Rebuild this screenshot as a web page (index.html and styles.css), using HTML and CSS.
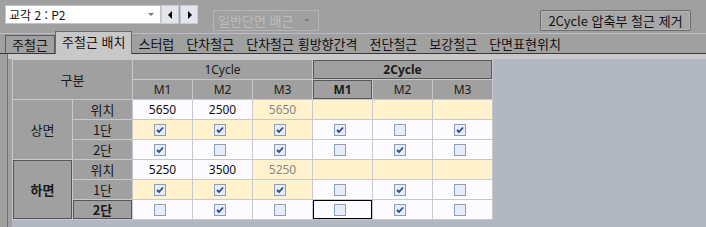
FILE: index.html
```html
<!DOCTYPE html>
<html lang="ko">
<head>
    <meta charset="UTF-8">
    <title>주철근 배치</title>
    <link rel="stylesheet" href="styles.css">
</head>
<body>
    <div class="toolbar">
        <div class="combo combo-main">
            <span>교각 2 : P2</span>
            <i class="caret"></i>
        </div>
        <div class="nav-group">
            <button class="nav-button"><svg width="5" height="8" viewBox="0 0 5 8"><path d="M4 0 L0 4 L4 8 Z" fill="#000"/></svg></button>
            <button class="nav-button"><svg width="5" height="8" viewBox="0 0 5 8"><path d="M1 0 L5 4 L1 8 Z" fill="#000"/></svg></button>
        </div>
        <div class="combo combo-disabled">
            <span>일반단면 배근</span>
            <i class="caret"></i>
        </div>
        <button class="action-button">2Cycle 압축부 철근 제거</button>
    </div>

    <div class="tabs">
        <div class="tab tab-first">주철근</div>
        <div class="tab tab-active">주철근 배치</div>
        <div class="tab">스터럽</div>
        <div class="tab">단차철근</div>
        <div class="tab">단차철근 횡방향간격</div>
        <div class="tab">전단철근</div>
        <div class="tab">보강철근</div>
        <div class="tab">단면표현위치</div>
    </div>

    <div class="panel">
        <div class="panel-strip"></div>
        <div class="panel-body">
            <div class="content">
                <div class="grid">
                    <!-- header -->
                    <div class="cell head ko span-head">구분</div>
                    <div class="cell head span-cycle">1Cycle</div>
                    <div class="cell head span-cycle selected">2Cycle</div>
                    <div class="cell head">M1</div>
                    <div class="cell head">M2</div>
                    <div class="cell head">M3</div>
                    <div class="cell head selected">M1</div>
                    <div class="cell head">M2</div>
                    <div class="cell head">M3</div>

                    <!-- 상면 -->
                    <div class="cell head ko span-side">상면</div>
                    <div class="cell head ko">위치</div>
                    <div class="cell data">5650</div>
                    <div class="cell data">2500</div>
                    <div class="cell data yellow muted">5650</div>
                    <div class="cell data yellow"></div>
                    <div class="cell data yellow"></div>
                    <div class="cell data yellow"></div>

                    <div class="cell head ko">1단</div>
                    <div class="cell data yellow check"><span class="chk on"><svg viewBox="0 0 10 10"><path d="M2 5 L4 7 L8 2.5"/></svg></span></div>
                    <div class="cell data yellow check"><span class="chk on"><svg viewBox="0 0 10 10"><path d="M2 5 L4 7 L8 2.5"/></svg></span></div>
                    <div class="cell data yellow check"><span class="chk on"><svg viewBox="0 0 10 10"><path d="M2 5 L4 7 L8 2.5"/></svg></span></div>
                    <div class="cell data check"><span class="chk on"><svg viewBox="0 0 10 10"><path d="M2 5 L4 7 L8 2.5"/></svg></span></div>
                    <div class="cell data check"><span class="chk"></span></div>
                    <div class="cell data check"><span class="chk on"><svg viewBox="0 0 10 10"><path d="M2 5 L4 7 L8 2.5"/></svg></span></div>

                    <div class="cell head ko">2단</div>
                    <div class="cell data check"><span class="chk on"><svg viewBox="0 0 10 10"><path d="M2 5 L4 7 L8 2.5"/></svg></span></div>
                    <div class="cell data check"><span class="chk"></span></div>
                    <div class="cell data check"><span class="chk on"><svg viewBox="0 0 10 10"><path d="M2 5 L4 7 L8 2.5"/></svg></span></div>
                    <div class="cell data check"><span class="chk"></span></div>
                    <div class="cell data check"><span class="chk on"><svg viewBox="0 0 10 10"><path d="M2 5 L4 7 L8 2.5"/></svg></span></div>
                    <div class="cell data check"><span class="chk"></span></div>

                    <!-- 하면 -->
                    <div class="cell head ko span-side selected">하면</div>
                    <div class="cell head ko">위치</div>
                    <div class="cell data">5250</div>
                    <div class="cell data">3500</div>
                    <div class="cell data yellow muted">5250</div>
                    <div class="cell data yellow"></div>
                    <div class="cell data yellow"></div>
                    <div class="cell data yellow"></div>

                    <div class="cell head ko">1단</div>
                    <div class="cell data yellow check"><span class="chk on"><svg viewBox="0 0 10 10"><path d="M2 5 L4 7 L8 2.5"/></svg></span></div>
                    <div class="cell data yellow check"><span class="chk on"><svg viewBox="0 0 10 10"><path d="M2 5 L4 7 L8 2.5"/></svg></span></div>
                    <div class="cell data yellow check"><span class="chk on"><svg viewBox="0 0 10 10"><path d="M2 5 L4 7 L8 2.5"/></svg></span></div>
                    <div class="cell data check"><span class="chk"></span></div>
                    <div class="cell data check"><span class="chk on"><svg viewBox="0 0 10 10"><path d="M2 5 L4 7 L8 2.5"/></svg></span></div>
                    <div class="cell data check"><span class="chk"></span></div>

                    <div class="cell head ko selected">2단</div>
                    <div class="cell data check"><span class="chk"></span></div>
                    <div class="cell data check"><span class="chk on"><svg viewBox="0 0 10 10"><path d="M2 5 L4 7 L8 2.5"/></svg></span></div>
                    <div class="cell data check"><span class="chk"></span></div>
                    <div class="cell data check focused"><span class="chk"></span></div>
                    <div class="cell data check"><span class="chk on"><svg viewBox="0 0 10 10"><path d="M2 5 L4 7 L8 2.5"/></svg></span></div>
                    <div class="cell data check"><span class="chk"></span></div>
                </div>
            </div>
        </div>
    </div>
</body>
</html>
```

FILE: styles.css
```css
body {
    margin: 0;
    width: 706px;
    height: 227px;
    overflow: hidden;
    background: #a0a0a0;
    font-family: "Noto Sans CJK KR", "Noto Sans", sans-serif;
    font-size: 13px;
    color: #111;
}
.toolbar {
    display: flex;
    align-items: flex-start;
    box-sizing: border-box;
    height: 34px;
    border-bottom: 1px solid #b9bdc9;
}
.combo {
    box-sizing: border-box;
    display: flex;
    align-items: center;
    justify-content: space-between;
    width: 156px;
    height: 19px;
    margin: 5px 0 0 5px;
    padding: 0 6px 0 3px;
    background: #fff;
    border: 1px solid #c4c4c4;
    line-height: 17px;
}
.combo-main {
    font-size: 12px;
}
.caret {
    width: 0;
    height: 0;
    border-left: 3px solid transparent;
    border-right: 3px solid transparent;
    border-top: 3px solid #777;
}
.nav-group {
    display: flex;
    gap: 1px;
    margin: 5px 0 0 0;
}
.nav-button {
    box-sizing: border-box;
    width: 18px;
    height: 19px;
    padding: 0;
    border: 1px solid #c6cad2;
    background: #e4e6eb;
    display: flex;
    align-items: center;
    justify-content: center;
}
.combo-disabled {
    width: 106px;
    height: 21px;
    margin: 10px 0 0 15px;
    padding: 0 8px 0 4px;
    background: transparent;
    border-color: #b5b5b5;
    color: #bdbdbd;
    line-height: 19px;
}
.combo-disabled .caret {
    border-top-color: #86836c;
}
.action-button {
    box-sizing: border-box;
    width: 151px;
    height: 21px;
    margin: 10px 15px 0 auto;
    padding: 0;
    border: 1px solid #6c6c6c;
    border-radius: 2px;
    background: #a6a6a6;
    box-shadow: inset 0 0 0 1px #b4b4b4;
    font-family: "Noto Sans CJK KR", "Noto Sans", sans-serif;
    font-size: 13px;
    color: #111;
    line-height: 18px;
}
.tabs {
    display: flex;
    align-items: flex-end;
    height: 19px;
    padding-left: 5px;
    border-bottom: 1px solid #3a3a3a;
}
.tab {
    height: 18px;
    line-height: 17px;
    padding: 0 6px;
    white-space: nowrap;
    color: #111;
}
.tab-first {
    box-sizing: border-box;
    width: 50px;
    padding: 0;
    text-align: center;
    border: 1px solid #5e5e5e;
    border-bottom: none;
}
.tab-active {
    position: relative;
    z-index: 1;
    height: 22px;
    margin-bottom: -1px;
    line-height: 20px;
    border: 1px solid #6a6a6a;
    border-bottom: none;
    background: #c8c8c8;
}
.panel {
    margin-left: 7px;
    border-left: 1px solid #6f6f6f;
}
.panel-strip {
    height: 5px;
    background: #c8c8c8;
}
.panel-body {
    display: flex;
    height: 168px;
    padding-left: 4px;
    background: #a2a2a2;
}
.content {
    flex: 1;
    background: #b3b7c1;
}
.grid {
    display: grid;
    grid-template-columns: repeat(8, 59px);
    grid-auto-rows: 19px;
    gap: 1px;
    padding: 1px;
    width: max-content;
    background: #c9c9cd;
    font-family: "Noto Sans", "Noto Sans CJK KR", sans-serif;
    font-size: 12px;
}
.cell {
    display: flex;
    align-items: center;
    justify-content: center;
    line-height: 1;
}
.ko {
    font-family: "Noto Sans CJK KR", sans-serif;
    font-size: 13px;
}
.head {
    background: #a0a0a0;
    color: #1a1a1a;
}
.span-head {
    grid-column: span 2;
    grid-row: span 2;
}
.span-cycle {
    grid-column: span 3;
}
.span-side {
    grid-row: span 3;
}
.selected {
    font-weight: bold;
    box-shadow: inset 0 0 0 1px #575757;
}
.data {
    background: #fcfbff;
    color: #111;
}
.yellow {
    background: #fff2cc;
}
.muted {
    color: #888;
}
.check {
    padding-right: 5px;
}
.focused {
    box-shadow: inset 0 0 0 1px #000;
}
.chk {
    box-sizing: border-box;
    display: block;
    width: 12px;
    height: 12px;
    border: 1px solid #8e9cb9;
    background: #e6edf9;
}
.chk svg {
    display: block;
    width: 10px;
    height: 10px;
    fill: none;
    stroke: #2b4a8a;
    stroke-width: 1.8;
}
```
